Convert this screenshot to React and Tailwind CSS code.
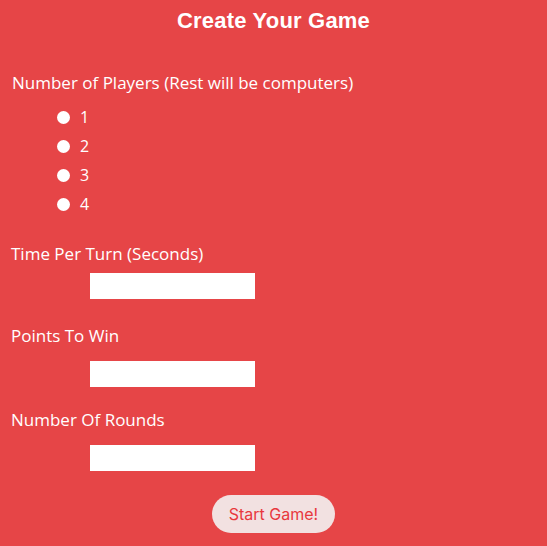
const Field = ({ label }) => (
    <div>
        <div className="pl-[11px] text-[17px] leading-[22px]">{label}</div>
        <div className="mt-[8px] pl-[90px]">
            <input type="text" className="block w-[165px] h-[26px] bg-white outline-none border-0 text-black px-1" />
        </div>
    </div>
);

export default function App() {
    return (
        <div className="min-h-screen w-full bg-[#e64547] text-white font-['Open_Sans',sans-serif]">
            <h1 className="pt-[7px] text-center text-[22px] leading-[28px] font-bold font-['Liberation_Sans',sans-serif] tracking-[0.2px]">
                Create Your Game
            </h1>
            <div className="mt-[37px] pl-[12px] text-[17px] leading-[22px]">
                Number of Players (Rest will be computers)
            </div>
            <div className="mt-[16px] pl-[57px] flex flex-col gap-[15px]">
                {[1, 2, 3, 4].map((n) => (
                    <label key={n} className="flex items-center h-[14px] text-[16px]">
                        <span className="w-[13px] h-[13px] rounded-full bg-white inline-block"></span>
                        <span className="ml-[10px]">{n}</span>
                    </label>
                ))}
            </div>
            <div className="mt-[32px]">
                <Field label="Time Per Turn (Seconds)" />
                <div className="mt-[26px]">
                    <div className="pl-[11px] text-[17px] leading-[22px]">Points To Win</div>
                    <div className="mt-[14px] pl-[90px]">
                        <input type="text" className="block w-[165px] h-[26px] bg-white outline-none border-0 text-black px-1" />
                    </div>
                </div>
                <div className="mt-[22px]">
                    <div className="pl-[11px] text-[17px] leading-[22px]">Number Of Rounds</div>
                    <div className="mt-[14px] pl-[90px]">
                        <input type="text" className="block w-[165px] h-[26px] bg-white outline-none border-0 text-black px-1" />
                    </div>
                </div>
            </div>
            <div className="mt-[24px] flex justify-center pb-[13px]">
                <button className="w-[123px] h-[38px] rounded-full bg-[#f2e1e1] text-[#e8383d] text-[16px] font-['Inter',sans-serif]">
                    Start Game!
                </button>
            </div>
        </div>
    );
}
